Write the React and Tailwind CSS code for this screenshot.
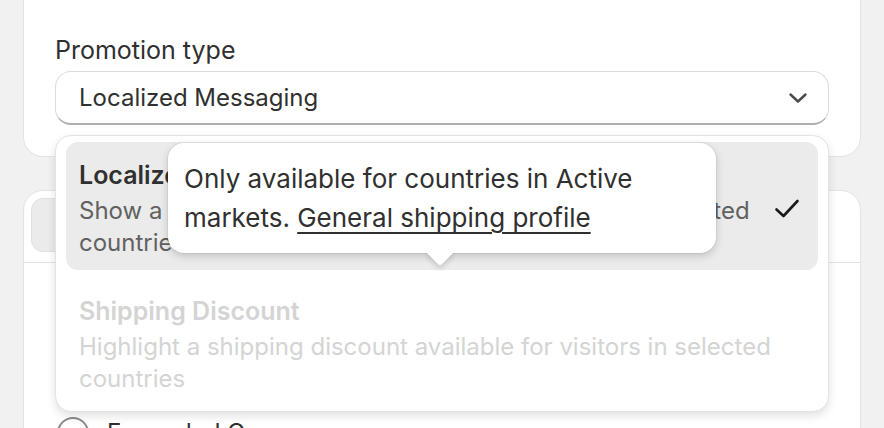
import React from 'react';

function Chevron() {
  return (
    <svg width="20" height="20" viewBox="0 0 20 20" fill="none" className="text-[#4a4a4a]">
      <path d="M2.5 6.5l7.5 7 7.5-7" stroke="currentColor" strokeWidth="2.4" strokeLinecap="round" strokeLinejoin="round" />
    </svg>
  );
}

function Check() {
  return (
    <svg width="26" height="22" viewBox="0 0 26 22" fill="none">
      <path d="M2.5 11.5l7 6.5 14-15" stroke="#1a1a1a" strokeWidth="2.6" strokeLinecap="round" strokeLinejoin="round" />
    </svg>
  );
}

function Option({ title, desc, selected, disabled }) {
  return (
    <div className={`flex items-center rounded-[12px] pl-[13px] pr-[18px] pt-[17px] pb-[11px] ${selected ? 'bg-[#ebebeb]' : ''}`}>
      <div className="flex-1">
        <div className={`text-[25px] leading-[32px] font-semibold ${disabled ? 'text-[#d4d4d4]' : 'text-[#303030]'}`}>{title}</div>
        <div className={`mt-[4px] text-[24px] leading-[32px] ${disabled ? 'text-[#d4d4d4]' : 'text-[#616161]'}`}>{desc}</div>
      </div>
      {selected && <Check />}
    </div>
  );
}

export default function App() {
  return (
    <div className="relative w-[884px] h-[428px] overflow-hidden bg-[#f1f1f1] font-['Inter',sans-serif] text-[#303030]">
      <div className="mx-[23px] -mt-[20px] rounded-[20px] border border-[#e3e3e3] bg-white px-[31px] pt-[53px] pb-[31px]">
        <div className="text-[25px] leading-[32px]">Promotion type</div>
        <div className="mt-[5px] flex h-[54px] items-center justify-between rounded-[16px] border border-[#dcdcdc] border-b-[#b0b0b0] border-b-2 pl-[23px] pr-[20px]">
          <span className="text-[24px]">Localized Messaging</span>
          <Chevron />
        </div>
      </div>

      <div className="mx-[23px] mt-[33px] rounded-t-[20px] border border-[#e3e3e3] bg-white">
        <div className="pl-[7px] pr-[120px] pt-[7px]">
          <div className="h-[54px] rounded-[12px] border border-[#e0e0e0] bg-[#ebebeb]" />
        </div>
        <div className="mt-[10px] border-t border-[#e3e3e3]" />
        <div className="h-[152px]" />
        <div className="flex items-center gap-[18px] pl-[33px]">
          <div className="h-[32px] w-[32px] rounded-full border-2 border-[#8a8a8a]" />
          <span className="text-[24px]">Expanded Groups</span>
        </div>
      </div>

      <div className="absolute left-[55px] top-[135px] w-[774px] rounded-[16px] border border-[#e3e3e3] bg-white px-[10px] pt-[6px] pb-[5px] shadow-[0_4px_10px_rgba(0,0,0,0.12)]">
        <Option
          selected
          title="Localized Messaging"
          desc="Show a localized message tailored to all visitors in selected countries"
        />
        <div className="mt-[8px]">
          <Option
            disabled
            title="Shipping Discount"
            desc="Highlight a shipping discount available for visitors in selected countries"
          />
        </div>
      </div>

      <div className="absolute left-[168px] top-[143px] w-[548px] rounded-[16px] bg-white pl-[16px] pr-[12px] pt-[16px] pb-[16px] shadow-[0_3px_8px_rgba(0,0,0,0.18),0_0_0_1px_rgba(0,0,0,0.04)]">
        <div className="absolute bottom-[-9px] left-[262px] h-[20px] w-[20px] rotate-45 rounded-[3px] bg-white shadow-[3px_3px_5px_rgba(0,0,0,0.12)]" />
        <p className="relative text-[26px] leading-[39px] text-[#303030]">
          Only available for countries in Active markets.{' '}
          <span className="underline underline-offset-[5px] decoration-[2px]">General shipping profile</span>
        </p>
      </div>
    </div>
  );
}
